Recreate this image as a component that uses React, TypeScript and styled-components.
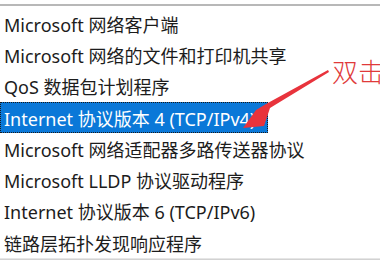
import React from 'react'
import styled, { createGlobalStyle } from 'styled-components'

const Global = createGlobalStyle`
	html, body { margin: 0; padding: 0; background: #ffffff; }
	body { width: 380px; height: 260px; overflow: hidden; }
`

const Frame = styled.div`
	position: relative;
	width: 380px;
	height: 260px;
	display: flex;
	flex-direction: column;
	background: #ffffff;
	overflow: hidden;
`

const TopEdge = styled.div`
	height: 4px;
	border-bottom: 2px solid #b8b8b8;
	flex-shrink: 0;
`

const List = styled.ul`
	list-style: none;
	margin: 0;
	padding: 2px 0 0 0;
	flex: 1;
	display: flex;
	flex-direction: column;
	font-family: "Noto Sans", "Noto Sans CJK SC", sans-serif;
	font-size: 18px;
	color: #1c1c1c;
`

const Row = styled.li<{ $selected?: boolean }>`
	height: 31.3px;
	box-sizing: border-box;
	display: flex;
	align-items: center;
	padding-left: 4px;
	white-space: nowrap;
	width: ${p => (p.$selected ? '268px' : 'auto')};
	background: ${p => (p.$selected ? '#0a78d8' : 'transparent')};
	color: ${p => (p.$selected ? '#ffffff' : 'inherit')};
	outline: ${p => (p.$selected ? '1px dotted #1a1a1a' : 'none')};
	outline-offset: -1px;
`

const BottomBar = styled.div`
	height: 9px;
	flex-shrink: 0;
	background: #d2d2d2;
	border-top: 1px solid #e6e6e6;
`

const Note = styled.span`
	position: absolute;
	left: 332px;
	top: 52px;
	font-family: "Noto Sans CJK SC", sans-serif;
	font-weight: 300;
	font-size: 26px;
	color: #e03a3a;
	white-space: nowrap;
`

const Arrow = styled.svg`
	position: absolute;
	left: 0;
	top: 0;
	pointer-events: none;
`

const items = [
	'Microsoft 网络客户端',
	'Microsoft 网络的文件和打印机共享',
	'QoS 数据包计划程序',
	'Internet 协议版本 4 (TCP/IPv4)',
	'Microsoft 网络适配器多路传送器协议',
	'Microsoft LLDP 协议驱动程序',
	'Internet 协议版本 6 (TCP/IPv6)',
	'链路层拓扑发现响应程序',
]

const App: React.FC = () => {
	return (
		<Frame>
			<Global />
			<TopEdge />
			<List>
				{items.map((item, i) => (
					<Row key={item} $selected={i === 3}>{item}</Row>
				))}
			</List>
			<BottomBar />
			<Note>双击</Note>
			<Arrow width="380" height="260" viewBox="0 0 380 260">
				<polygon
					points="328,70 329,72 270,108 264,126 243,128 256,110 266,104"
					fill="#e8333c"
				/>
			</Arrow>
		</Frame>
	)
}

export default App
